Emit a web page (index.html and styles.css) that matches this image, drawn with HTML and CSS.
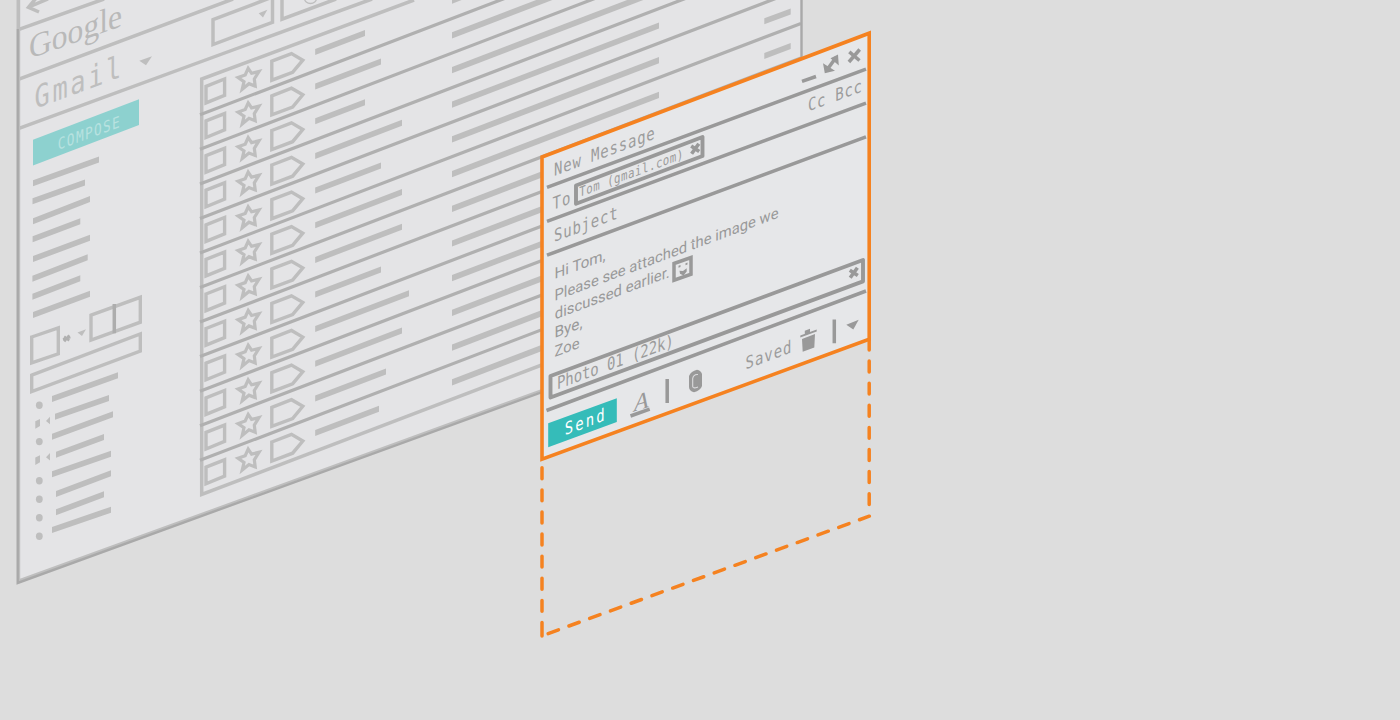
FILE: index.html
```html
<!DOCTYPE html>
<html lang="en">
<head>
<meta charset="utf-8">
<title>Gmail compose</title>
<link rel="stylesheet" href="styles.css">
</head>
<body>
<main class="stage">
<svg class="scene" viewBox="0 0 1400 720" role="img" aria-label="Inbox with a new message window">
  <defs>
    <g id="row">
      <path class="outline" d="M206 86.300 224.600 79V95.300L206 102.900Z"/>
      <path class="outline star" d="M248.200 68.300 251.600 73.300 259 71.500 254.300 79 255.200 86.100 249 83.700 242.200 89.300 244 81.700 238 77.500 245.200 74.900Z"/>
      <path class="outline" d="M271.800 61.200 291.500 53.600 302.800 60.200 292.600 72.400 271.800 80.200Z"/>
    </g>
    <path id="subject" class="fill" d="M452 -3 659 -82.200V-76L452 3.200Z"/>
    <path id="cross" d="M-4 -2.600 4 2.800M-3.600 5 3.600 -5"/>
  </defs>

  <!-- inbox window -->
  <path class="panel" d="M18 -10H801V297.500L18 583Z"/>
  <path class="line" d="M19 29.300 104 -1M19 79.200 233 -1M19 128.300 372 -1"/>
  <path class="line" d="M48 -1 29 6.800M37 -3 28.500 7.300 39 12"/>
  <path class="line" d="M213 19.600 272.500 -3V22.300L213 44.600Z"/>
  <path class="fill" d="M258.700 13.300 267.300 9.800 263 17.500Z"/>
  <path class="line" d="M282 -5V19.200L336 -1"/>
  <ellipse class="hair" cx="310.500" cy="-1.500" rx="6" ry="5"/>
  <text class="google" transform="matrix(1 -.355 0 1 29 59)" textLength="93" lengthAdjust="spacingAndGlyphs">Google</text>
  <text class="gmail" transform="matrix(.82 -.3034 0 1 34.500 109)" textLength="106">Gmail</text>
  <path class="fill" d="M139.300 60.700 152 56.300 146 65.300Z"/>

  <!-- sidebar -->
  <path class="compose" d="M33 139.800 139 99.300V125L33 165.500Z"/>
  <text class="mono compose-label" transform="matrix(.8 -.296 0 1 57.800 150)" textLength="77.500">COMPOSE</text>
  <g class="fill">
    <path d="M33 180.300l66 -23.800v6l-66 23.800zM32.500 198.300l52.500 -18.800v6l-52.500 18.800zM33 218.300l57 -22.400v6l-57 22.400zM32.600 236.300l47.700 -18v6l-47.700 18zM33 256l57 -21.300v6l-57 21.300zM32.400 275.700l55.300 -21.400v6l-55.300 21.400zM32.400 293.700l47.900 -18.400v6l-47.900 18.400zM33 312l57 -21.300v6l-57 21.300z"/>
    <path d="M52 396l66 -23.700v6l-66 23.700zM55 413.700l54 -18.700v6l-54 18.700zM52 433.700l61 -22.400v6l-61 22.400zM56 451.700l48 -17.700v6l-48 17.700zM52 471.300l59 -20.600v6l-59 20.600zM56 491l55 -20.700v6l-55 20.700zM56 509.300l48 -18v6l-48 18zM52 527l59 -20.300v6l-59 20.300z"/>
  </g>
  <path class="outline" d="M31.700 337 58.300 327.900V353.800L31.700 362.800Z"/>
  <path class="gear" d="M64.200 336.500 69.200 340.500M64.300 341.500 69.200 335.300M63 339.500 70.400 337.200"/>
  <path class="fill" d="M77.500 332.500 86 329.300 82 336Z"/>
  <path class="outline" d="M91 315.200 140.300 297.300V322.200L91 340Z"/>
  <path class="divider" d="M114.300 304V333.300"/>
  <path class="outline" d="M31.700 375.200 140.300 334V351L31.700 391.500Z"/>
  <g class="fill">
    <ellipse cx="39.300" cy="405.300" rx="3.400" ry="3.700"/>
    <ellipse cx="39.300" cy="441.600" rx="3.400" ry="3.700"/>
    <ellipse cx="39.300" cy="480.700" rx="3.400" ry="3.700"/>
    <ellipse cx="39.300" cy="499.300" rx="3.400" ry="3.700"/>
    <ellipse cx="39.300" cy="517.700" rx="3.400" ry="3.700"/>
    <ellipse cx="39.300" cy="536.300" rx="3.400" ry="3.700"/>
    <path d="M35.300 421.300 40 419V426L35.300 428.700ZM46 421 50 416.700V424.300Z"/>
    <path d="M35.300 457.600 40 455.300V462.300L35.300 465ZM46 457.300 50 453V460.600Z"/>
  </g>

  <!-- message list -->
  <path class="line" d="M414 0 201.700 79V494.500L560 358"/>
  <path class="separator" d="M200 114.800 801 -114.800M200 149.300 801 -80.300M200 183.900 801 -45.700M200 218.400 801 -11.200M200 253 801 23.400M200 287.500 801 57.900M200 322.100 801 92.500M200 356.600 801 127M200 391.200 801 161.600M200 425.700 801 196.100M200 460.300 801 230.700"/>
  <use href="#row"/>
  <use href="#row" y="34.600"/>
  <use href="#row" y="69.300"/>
  <use href="#row" y="103.800"/>
  <use href="#row" y="138.500"/>
  <use href="#row" y="173"/>
  <use href="#row" y="207.700"/>
  <use href="#row" y="242.200"/>
  <use href="#row" y="276.900"/>
  <use href="#row" y="311.500"/>
  <use href="#row" y="346.100"/>
  <use href="#row" y="380.800"/>
  <g class="fill">
    <path d="M315.200 49l49.800 -19v6l-49.800 19zM315.200 83.600l65.800 -25.200v6l-65.800 25.200zM315.200 118.300l49.800 -19.100v6l-49.800 19.100zM315.200 153l86.800 -33.200v6l-86.800 33.200zM315.200 187.600l65.800 -25.200v6l-65.800 25.200zM315.200 222.200l86.800 -33.200v6l-86.800 33.200z"/>
    <path d="M315.200 256.900l86.800 -33.200v6l-86.800 33.200zM315.200 291.500l65.800 -25.100v6l-65.800 25.100zM315.200 326.100l93.800 -35.900v6l-93.800 35.900zM315.200 360.700l86.800 -33.200v6l-86.800 33.200zM315.200 395.400l70.800 -27v6l-70.800 27zM315.200 430l63.800 -24.300v6l-63.800 24.300z"/>
    <path d="M764.300 18.300l26.400 -9.900v6l-26.400 9.900zM764.300 53l26.400 -9.900v6l-26.400 9.900z"/>
  </g>
  <use href="#subject" y=".5"/>
  <use href="#subject" y="35.200"/>
  <use href="#subject" y="70"/>
  <use href="#subject" y="104.600"/>
  <use href="#subject" y="139.300"/>
  <use href="#subject" y="174"/>
  <use href="#subject" y="208.700"/>
  <use href="#subject" y="243.400"/>
  <use href="#subject" y="278.100"/>
  <use href="#subject" y="312.800"/>
  <use href="#subject" y="347.500"/>
  <use href="#subject" y="382.300"/>
  <path class="frame-inner" d="M19 -10V580.500L801 296"/>
  <path class="frame" d="M17.700 29V583L801.500 297.500V-10"/>
  <path class="frame-top" d="M17.700 -10V29"/>

  <!-- new message window -->
  <path class="message" d="M542 157 869.200 33.200V339.300L542 459.200Z"/>
  <g class="ink-line">
    <path d="M547 187.300 866 69.100M547 221.300 866 103.200M547 255.200 866 136.900M546.500 410.500 866 291"/>
    <path class="rounded" d="M550.500 376 863 260V281.300L550.500 397.500Z"/>
    <path class="rounded" d="M576 185.500 702.500 137V156L576 203.800Z"/>
    <path d="M802 81.300 816 76.500M667.200 379V403M834.300 319.500V343.200"/>
    <path d="M849.300 51.800 859.500 60.500M848.900 62 859.700 49.500"/>
    <path d="M826.500 70.500 836 57.500"/>
    <path d="M630.500 416 649.700 409.200"/>
    <use href="#cross" class="cross" x="695.200" y="148.700"/>
    <use href="#cross" class="cross" x="853.800" y="272.800"/>
    <path class="image" d="M674 263.500 691 257.500V274.200L674 280.200Z"/>
  </g>
  <g class="ink">
    <path d="M830.500 58.200 838 54.600 838.800 65.500ZM823 63.200 824.800 73.200 835 70.800Z"/>
    <path d="M678.500 265.800l2 -.7v2l-2 .7ZM685.500 263.300l2 -.7v2l-2 .7ZM679.500 270.800 683 271 686.700 268.300V271.500L683.500 275.400 680 273.700Z"/>
    <path d="M800.300 335.600 816.700 329.600V331.600L800.300 337.600ZM804.800 330.800 810 328.800V332.300L804.800 334.300ZM802 339 815 333.900 814.300 347.600 802.700 351.700Z"/>
    <path d="M846.300 324.700 858.700 319.700 853.300 329.500Z"/>
    <path d="M689 376Q691 371 697 369.700 701 370.500 702 374V386Q700.500 390.500 694 392.300 689 391 689 387Z"/>
  </g>
  <path class="clip" d="M698 374.500Q693.500 374 692.700 378.500V386.500Q693 389 698 387"/>
  <g class="mono">
    <text transform="matrix(.8 -.296 0 1 554 176)" textLength="126">New Message</text>
    <text transform="matrix(.8 -.296 0 1 552.500 210)" textLength="22.500">To</text>
    <text class="small" transform="matrix(.8 -.296 0 1 579.300 197)" textLength="130">Tom (gmail.com)</text>
    <text transform="matrix(.8 -.296 0 1 554 242)" textLength="79.500">Subject</text>
    <text transform="matrix(.8 -.296 0 1 808 111.500)" textLength="67.500">Cc Bcc</text>
    <text transform="matrix(.8 -.296 0 1 557 389.500)" textLength="146">Photo 01 (22k)</text>
    <text transform="matrix(.8 -.296 0 1 745.500 369.500)" textLength="57.500">Saved</text>
  </g>
  <g class="body">
    <text transform="matrix(1 -.37 0 1 554.500 279)" textLength="51" lengthAdjust="spacingAndGlyphs">Hi Tom,</text>
    <text transform="matrix(1 -.372 0 1 554.500 301)" textLength="224" lengthAdjust="spacingAndGlyphs">Please see attached the image we</text>
    <text transform="matrix(1 -.37 0 1 554.800 319.500)" textLength="115" lengthAdjust="spacingAndGlyphs">discussed earlier.</text>
    <text transform="matrix(1 -.37 0 1 554.500 338)" textLength="28" lengthAdjust="spacingAndGlyphs">Bye,</text>
    <text transform="matrix(1 -.37 0 1 554.500 357)" textLength="25" lengthAdjust="spacingAndGlyphs">Zoe</text>
  </g>
  <path class="send" d="M548.200 423.300 616.800 398.200V422L548.200 447.200Z"/>
  <text class="mono send-label" transform="matrix(.8 -.296 0 1 564.800 435.300)" textLength="50">Send</text>
  <text class="format" transform="matrix(1 -.3 0 1 634 411.500)">A</text>

  <!-- drop area -->
  <path class="dash" d="M542 467.800V637M542 630V636"/>
  <path class="dash" d="M869.200 339V350M869.200 361.100V507"/>
  <path class="dash" d="M548.200 633.600 869.300 516.200"/>
</svg>
</main>
</body>
</html>
```
FILE: styles.css
```css
body {
  margin: 0;
  background: #ddd;
  overflow: hidden;
}

.stage {
  width: 1400px;
  height: 720px;
}

.scene {
  display: block;
  width: 100%;
  height: 100%;
}

.panel { fill: #e4e4e6; }

.line,
.outline,
.hair,
.gear,
.divider,
.separator,
.frame,
.frame-inner,
.frame-top {
  fill: none;
  stroke: #bebebe;
  stroke-width: 3.5;
}

.outline { stroke-width: 3.4; }
.star { stroke-width: 3.2; }
.hair { stroke-width: 1.3; }
.gear { stroke: #b0b0b0; stroke-width: 2.4; }
.divider { stroke: #adadad; }
.separator { stroke: #b0b0b0; stroke-width: 3.2; }
.frame { stroke: #a9a9a9; stroke-width: 2.4; }
.frame-inner { stroke-width: 2.4; }
.frame-top { stroke-width: 2.4; }

.fill { fill: #bebebe; }

.compose { fill: #8dd1cf; }

.google {
  font-family: "Liberation Serif", serif;
  font-size: 34px;
  fill: #b9b9b9;
}

.gmail {
  font-family: "DejaVu Sans Mono", monospace;
  font-size: 31px;
  fill: #bebebe;
}

.mono {
  font-family: "DejaVu Sans Mono", monospace;
  font-size: 17.500px;
  fill: #9c9c9c;
}

.small { font-size: 13.500px; }

.compose-label {
  font-size: 16px;
  fill: #b8e2e0;
}

.message {
  fill: #e6e7e9;
  stroke: #f58220;
  stroke-width: 3.6;
}

.ink { fill: #999; }

.ink-line {
  fill: none;
  stroke: #999;
  stroke-width: 3.5;
}

.rounded {
  stroke-width: 3.9;
  stroke-linejoin: round;
}

.image { stroke-width: 3.5; }

.cross { stroke-width: 3.6; }

.clip {
  fill: none;
  stroke: #dcdcde;
  stroke-width: 1.1;
}

.body {
  font-family: Roboto, sans-serif;
  font-size: 15.500px;
  fill: #999;
}

.send { fill: #35bcb9; }
.send-label { fill: #fff; }

.format {
  font-family: "Liberation Serif", serif;
  font-size: 24px;
  font-style: italic;
  fill: #999;
}

.dash {
  fill: none;
  stroke: #f58220;
  stroke-width: 3.5;
  stroke-linecap: round;
  stroke-dasharray: 10.900 11.200;
}
```
